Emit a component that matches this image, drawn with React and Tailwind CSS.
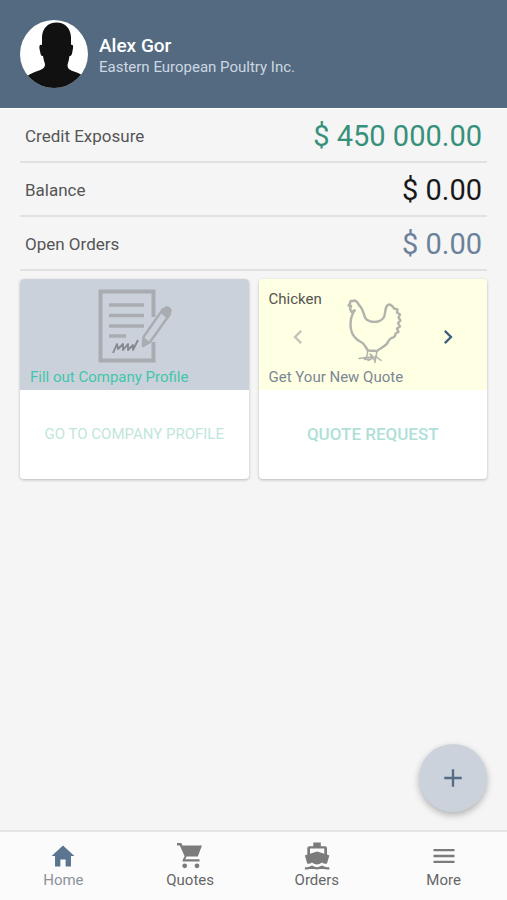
import { IoMdAdd, IoMdHome, IoMdMenu } from "react-icons/io"
import { MdChevronLeft, MdChevronRight } from "react-icons/md"

const CartIcon = ({ className }) => (
    <svg viewBox="0 0 28 28" className={`h-7 w-7 ${className}`} fill="currentColor" aria-hidden="true">
        <path d="M1 1H5.200L6.500 3.600H26L21.800 14.500H10.500L9.300 17.200H23.500V19.600H6.700Q6.300 18.500 7 17.200L8.600 14.200L3.800 3.400H1Z" />
        <circle cx="8.700" cy="23.800" r="2.400" />
        <circle cx="21" cy="23.800" r="2.400" />
    </svg>
)

const BoatIcon = ({ className }) => (
    <svg viewBox="0 0 28 28" className={`h-7 w-7 ${className}`} fill="currentColor" aria-hidden="true">
        <path
            fillRule="evenodd"
            d="M10.300 0.400H17.800V4.200H22Q24 4.200 24 6.200V12.600L26.300 13.600L24 21.500Q21.500 22.400 19 20.600Q16.500 22.500 14 22.500Q11.500 22.500 9 20.600Q6.500 22.400 4.200 21.500L1.900 13.600L4.300 12.600V6.200Q4.300 4.200 6.300 4.200H10.300ZM7 6.600V11.700L14.100 9.400L21.300 11.700V6.600Z"
        />
        <path d="M1.900 26.300H4Q6.500 26.300 9 24.800Q11.500 26.400 14 26.400Q16.500 26.400 19 24.800Q21.500 26.300 24 26.300H26.300" fill="none" stroke="currentColor" strokeWidth="2.200" />
    </svg>
)

const balances = [
    { label: "Credit Exposure", value: "$ 450 000.00", color: "text-[#37917a]" },
    { label: "Balance", value: "$ 0.00", color: "text-[#1a1a1a]" },
    { label: "Open Orders", value: "$ 0.00", color: "text-[#6b829a]" },
]

const tabs = [
    { label: "Home", icon: IoMdHome, iconColor: "text-[#5b7590]", textColor: "text-[#8c939c]" },
    { label: "Quotes", icon: CartIcon, iconColor: "text-[#7b7b7b]", textColor: "text-[#666666]" },
    { label: "Orders", icon: BoatIcon, iconColor: "text-[#7b7b7b]", textColor: "text-[#666666]" },
    { label: "More", icon: IoMdMenu, iconColor: "text-[#7b7b7b]", textColor: "text-[#666666]" },
]

const Avatar = () => (
    <svg viewBox="0 0 68 68" className="size-[68px] shrink-0 rounded-full bg-white" aria-hidden="true">
        <path
            fill="#111111"
            d="M36.500 2.500C45 2.500 50.500 8 51 17L51 25C53.500 23.500 53.500 27 52.500 31C52 35 51 36.500 49.500 36C49 40 48 43 47.500 45C47.500 49 50 50 54 51.500C58 53 61 54 62 55.500L62 68L8 68L8 55.500C11 53 15 52 19 50.500C23 49 25 47.500 25 44C24.300 42 23.500 39 23 36C21.500 36.500 20.500 35 20 31C19 27 19 23.500 22 25L22 17C22.500 8 28 2.500 36.500 2.500Z"
        />
    </svg>
)

const DocumentIcon = () => (
    <svg viewBox="0 0 90 90" className="h-[90px] w-[90px]" fill="none" aria-hidden="true">
        <path d="M64.500 35V9.500H11.500V78.500H64.500V60" stroke="#a9adb2" strokeWidth="4" />
        <path d="M20 23H55M20 33.500H55M20 44H55M20 54H37" stroke="#a9adb2" strokeWidth="3.500" />
        <path d="M24 71L28 62L29 67L34 62L34 68L39 62L39 68L44 63L44 68L49 58" stroke="#85898e" strokeWidth="1.800" strokeLinejoin="round" />
        <path d="M54.500 55L74 27L81 32L61 60L54 64Z" stroke="#a9adb2" strokeWidth="2.500" strokeLinejoin="round" />
        <path d="M71 30L75.500 25.500Q78 23.500 81 26Q83.500 28.500 81.500 31L78 36Z" fill="#a9adb2" stroke="#a9adb2" strokeWidth="1" />
        <path d="M54.500 55L61 60L54 65Z" fill="#a9adb2" />
    </svg>
)

const ChickenIcon = () => (
    <svg
        viewBox="-1 8 70 80"
        className="h-[80px] w-[70px]"
        fill="none"
        stroke="#b3b3ad"
        strokeWidth="2.400"
        strokeLinecap="round"
        strokeLinejoin="round"
        aria-hidden="true"
    >
        <path d="M15.500 21.500C12.500 26 11.500 31 11.500 36C11.500 43 14 47 18 50.500C21 53 24 53 26 57L29 61.500L38 62C41 59 46 58 48.500 54C50 51 50 50 52.500 49C55 48.500 56.500 47 56.500 44.500L59.500 43L58 39.500L61 37.500L59 34L61.500 31.500L59.500 28.500L61 25.500L58 23.500L58.500 20.500L55 19.500C53.500 17 52 15.500 50 15.500C47 16 46.500 20 46 24C45.500 29 43.500 31.500 39 32.500C34 33.500 28 32.500 26 28.500C24.500 24 23.500 19 20 16" />
        <path d="M15.500 21.500L12.500 23L11 20L12 17L9.500 16.500L11 14.500L11.500 12L14 12L16 11.500L18 13L20 16" />
        <path d="M28.500 61.500C29 64 28.500 66 27 68.500M27 68.500L20 69.500M27 68.500L33 68L31 65M27 68.500L25.500 70.500L30 70M38 62L37 67.500M37 67.500L29 71.500M37 67.500L42 71.500M37 67.500L36 73.500M32.500 66L36 72" strokeWidth="1.500" />
    </svg>
)

const Card = ({ children }) => (
    <article className="flex h-[200px] min-w-0 flex-1 flex-col overflow-hidden rounded-[4px] bg-white shadow-[0_1px_3px_rgba(0,0,0,0.25)]">
        {children}
    </article>
)

const App = () => {
    return (
        <div className="flex min-h-screen flex-col bg-[#f5f5f5] font-['Roboto',sans-serif]">
            <header className="flex items-center gap-[11px] border-b border-white bg-[#546a81] p-5">
                <Avatar />
                <div className="pt-1">
                    <h1 className="text-[19px] leading-[22px] font-medium text-white">Alex Gor</h1>
                    <p className="text-[15px] leading-5 text-[#cdd7e2]">Eastern European Poultry Inc.</p>
                </div>
            </header>

            <main className="flex-1 px-5">
                <dl>
                    {balances.map((row) => (
                        <div key={row.label} className="flex h-[54px] items-center justify-between border-b-2 border-[#e1e1e1] px-[5px] pt-[3px]">
                            <dt className="text-[17px] text-[#555555]">{row.label}</dt>
                            <dd className={`text-[29px] ${row.color}`}>{row.value}</dd>
                        </div>
                    ))}
                </dl>

                <div className="flex gap-[10px] pt-2">
                    <Card>
                        <div className="flex h-[111px] flex-col items-center justify-between bg-[#cbd1da] pt-[3px] pb-1">
                            <DocumentIcon />
                            <h2 className="-mt-1 w-full px-[10px] text-[15px] leading-[18px] text-[#3fc6ac]">Fill out Company Profile</h2>
                        </div>
                        <button type="button" className="flex-1 text-[15px] text-[#bfe6dc]">GO TO COMPANY PROFILE</button>
                    </Card>

                    <Card>
                        <div className="relative flex h-[111px] flex-col justify-between bg-[#ffffe3] px-[10px] pt-[11px] pb-1">
                            <h2 className="text-[15px] leading-[18px] text-[#555550]">Chicken</h2>
                            <div className="absolute inset-0 flex items-center justify-center gap-[26px] pt-1">
                                <button type="button" aria-label="Previous" className="text-[#c3c3b8]">
                                    <MdChevronLeft size={28} />
                                </button>
                                <ChickenIcon />
                                <button type="button" aria-label="Next" className="text-[#3f627c]">
                                    <MdChevronRight size={28} />
                                </button>
                            </div>
                            <p className="text-[15px] leading-[18px] text-[#7c8796]">Get Your New Quote</p>
                        </div>
                        <button type="button" className="flex-1 text-[17px] font-medium text-[#afe0d9]">QUOTE REQUEST</button>
                    </Card>
                </div>
            </main>

            <div className="sticky bottom-0">
                <button
                    type="button"
                    aria-label="Add"
                    className="absolute right-5 bottom-[88px] flex size-[68px] items-center justify-center rounded-full bg-[#cbd2db] text-[#566c84] shadow-[0_3px_7px_rgba(0,0,0,0.28)]"
                >
                    <IoMdAdd size={28} />
                </button>
                <nav className="flex h-[70px] border-t-2 border-[#e4e4e4] bg-[#fbfbfb]">
                    {tabs.map((tab) => (
                        <a key={tab.label} href="#" className="flex flex-1 flex-col items-center pt-[10px]">
                            <tab.icon size={28} className={tab.iconColor} />
                            <span className={`text-[15px] leading-5 ${tab.textColor}`}>{tab.label}</span>
                        </a>
                    ))}
                </nav>
            </div>
        </div>
    )
}

export default App
